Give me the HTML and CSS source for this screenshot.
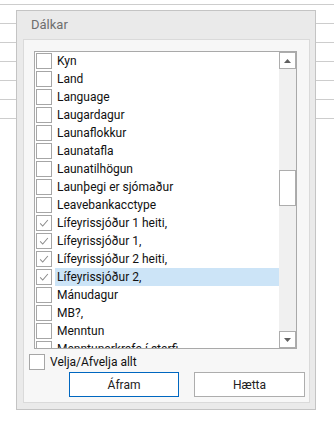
FILE: index.html
```html
<!DOCTYPE html>
<html lang="is">
<head>
    <meta charset="UTF-8">
    <meta name="viewport" content="width=device-width, initial-scale=1.0">
    <title>Dálkar</title>
    <link rel="stylesheet" href="styles.css">
</head>
<body>
    <div class="sheet">
        <div class="sheet-row"></div>
        <div class="sheet-row"></div>
        <div class="sheet-row"></div>
        <div class="sheet-row"></div>
        <div class="sheet-row"></div>
        <div class="sheet-row"></div>
        <div class="sheet-row"></div>
    </div>

    <div class="dialog">
        <div class="dialog-title">Dálkar</div>
        <div class="panel">
            <div class="listbox">
                <ul class="items">
                    <li class="item"><span class="box"></span><span class="label">Kyn</span></li>
                    <li class="item"><span class="box"></span><span class="label">Land</span></li>
                    <li class="item"><span class="box"></span><span class="label">Language</span></li>
                    <li class="item"><span class="box"></span><span class="label">Laugardagur</span></li>
                    <li class="item"><span class="box"></span><span class="label">Launaflokkur</span></li>
                    <li class="item"><span class="box"></span><span class="label">Launatafla</span></li>
                    <li class="item"><span class="box"></span><span class="label">Launatilhögun</span></li>
                    <li class="item"><span class="box"></span><span class="label">Launþegi er sjómaður</span></li>
                    <li class="item"><span class="box"></span><span class="label">Leavebankacctype</span></li>
                    <li class="item"><span class="box checked"><svg viewBox="0 0 14 14"><polyline points="2.5,7.5 5.5,10.5 11.5,3.5"/></svg></span><span class="label">Lífeyrissjóður 1 heiti,</span></li>
                    <li class="item"><span class="box checked"><svg viewBox="0 0 14 14"><polyline points="2.5,7.5 5.5,10.5 11.5,3.5"/></svg></span><span class="label">Lífeyrissjóður 1,</span></li>
                    <li class="item"><span class="box checked"><svg viewBox="0 0 14 14"><polyline points="2.5,7.5 5.5,10.5 11.5,3.5"/></svg></span><span class="label">Lífeyrissjóður 2 heiti,</span></li>
                    <li class="item selected"><span class="box checked"><svg viewBox="0 0 14 14"><polyline points="2.5,7.5 5.5,10.5 11.5,3.5"/></svg></span><span class="label">Lífeyrissjóður 2,</span></li>
                    <li class="item"><span class="box"></span><span class="label">Mánudagur</span></li>
                    <li class="item"><span class="box"></span><span class="label">MB?,</span></li>
                    <li class="item"><span class="box"></span><span class="label">Menntun</span></li>
                    <li class="item"><span class="box"></span><span class="label">Menntunarkrafa í starfi</span></li>
                </ul>
                <div class="scrollbar">
                    <div class="sb-btn"><svg viewBox="0 0 7 4"><polygon points="3.5,0 7,4 0,4"/></svg></div>
                    <div class="sb-track"><div class="sb-thumb"></div></div>
                    <div class="sb-btn"><svg viewBox="0 0 7 4"><polygon points="0,0 7,0 3.5,4"/></svg></div>
                </div>
            </div>

            <div class="select-all">
                <span class="box"></span>
                <span>Velja/Afvelja allt</span>
            </div>

            <div class="actions">
                <button class="btn btn-primary">Áfram</button>
                <button class="btn">Hætta</button>
            </div>
        </div>
    </div>
</body>
</html>
```

FILE: styles.css
```css
body {
    margin: 0;
    background: #fff;
    font-family: Roboto, "Liberation Sans", sans-serif;
    font-size: 12px;
    color: #111;
}
.sheet {
    padding-top: 4px;
}
.sheet-row {
    height: 19px;
    box-sizing: border-box;
    border-top: 1px solid #cdcdcd;
}
.dialog {
    position: absolute;
    left: 16px;
    top: 10px;
    width: 300px;
    height: 400px;
    box-sizing: border-box;
    border: 1px solid #c4c4c4;
    background: #eaeaea;
}
.dialog-title {
    height: 28px;
    line-height: 28px;
    padding-left: 14px;
    font-size: 13px;
    color: #6e6e6e;
}
.panel {
    margin: 0 5px 0 6px;
    height: 364px;
    box-sizing: border-box;
    border: 1px solid #dadada;
    background: #f7f7f7;
    padding: 11px 4px 0 5px;
}
.listbox {
    display: flex;
    width: 263px;
    height: 298px;
    margin-left: 5px;
    box-sizing: border-box;
    border: 1px solid #a9a9a9;
    background: #fff;
}
.items {
    flex: 1;
    margin: 0;
    padding: 0;
    list-style: none;
    overflow: hidden;
}
.item {
    display: flex;
    align-items: flex-start;
    height: 18px;
    white-space: nowrap;
}
.box {
    display: flex;
    align-items: center;
    justify-content: center;
    flex: none;
    width: 16px;
    height: 16px;
    box-sizing: border-box;
    border: 1px solid #a6a6a6;
    background: #fff;
}
.item .box {
    margin: 1px 0 0 1px;
}
.box svg {
    width: 12px;
    height: 12px;
    fill: none;
    stroke: #8a8a8a;
    stroke-width: 1.2;
}
.label {
    flex: 1;
    margin-left: 3px;
    padding: 0 2px;
    line-height: 18px;
}
.selected .label {
    background: #cce4f7;
}
.scrollbar {
    display: flex;
    flex-direction: column;
    width: 17px;
    background: #f0f0f0;
}
.sb-btn {
    display: flex;
    align-items: center;
    justify-content: center;
    height: 17px;
    box-sizing: border-box;
    border: 1px solid #adadad;
    background: #fff;
}
.sb-btn svg {
    width: 7px;
    height: 4px;
    fill: #606060;
}
.sb-track {
    flex: 1;
}
.sb-thumb {
    margin-top: 101px;
    height: 36px;
    box-sizing: border-box;
    border: 1px solid #adadad;
    background: #fff;
}
.select-all {
    display: flex;
    align-items: center;
    gap: 5px;
    margin-top: 5px;
    height: 16px;
    line-height: 16px;
}
.actions {
    display: flex;
    justify-content: flex-end;
    gap: 15px;
    margin-top: 2px;
}
.btn {
    width: 111px;
    height: 25px;
    border: 1px solid #adadad;
    background: #fff;
    font-family: Roboto, "Liberation Sans", sans-serif;
    font-size: 12px;
    color: #222;
    padding: 0;
}
.btn-primary {
    width: 110px;
    border-color: #0067c0;
}
```
